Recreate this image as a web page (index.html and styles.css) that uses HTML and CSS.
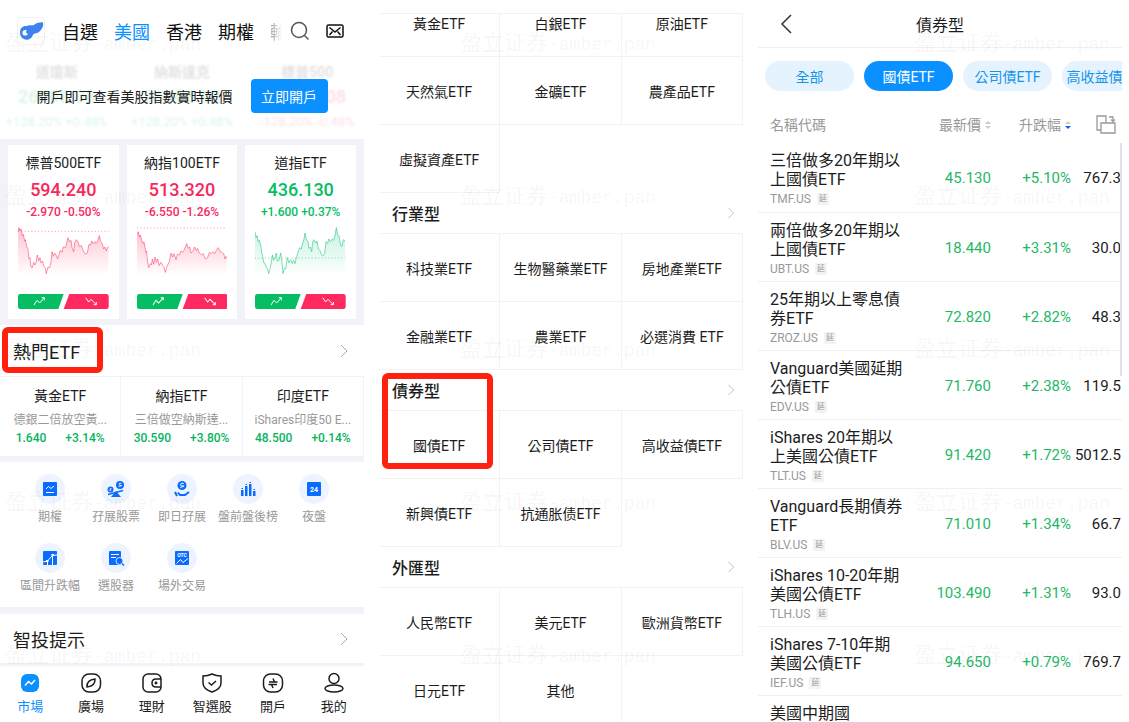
FILE: index.html
```html
<!DOCTYPE html>
<html lang="zh-Hant">
<head>
    <meta charset="UTF-8">
    <meta name="viewport" content="width=device-width, initial-scale=1.0">
    <title>ETF</title>
    <link rel="stylesheet" href="styles.css">
</head>
<body>
<div class="screens">

    <!-- market home -->
    <section class="screen home">
        <header class="topbar">
            <svg class="logo" viewBox="0 0 28 28"><rect x=".5" y=".5" width="27" height="27" rx="4" fill="#fff" stroke="#f0f0f0"/><path d="M3 15C3 11 6 8.500 10 9C12 7.500 15 9 17 8C20 5 23 6 25.500 5C27.500 8 25 12 23 14C20.500 17 17 15.500 16 18C14.500 22 10 24 7 22C4 21 3 18 3 15Z" fill="#3e82f0"/><path d="M5.500 16C5.500 13 8 12.500 10 13.500C8 14 9.500 17 11 17C9.500 19 5.500 19.500 5.500 16Z" fill="#fff"/></svg>
            <nav class="markets">
                <a href="#">自選</a>
                <a href="#" class="active">美國</a>
                <a href="#">香港</a>
                <a href="#">期權</a>
                <a href="#" class="cut">輪證</a>
            </nav>
            <button class="icon-btn" aria-label="搜尋"><svg width="20" height="20" viewBox="0 0 20 20" fill="none" stroke="#555" stroke-width="1.5"><circle cx="9" cy="9" r="7.500"/><path d="M14.500 14.500L18.500 18.500"/></svg></button>
            <button class="icon-btn mail" aria-label="訊息"><svg width="18" height="14" viewBox="0 0 18 14" fill="none" stroke="#111" stroke-width="1.5"><rect x="1" y="1" width="16" height="12" rx="1.500"/><path d="M3.500 3.500L9 8L14.500 3.500M3.500 11L6.500 7.500M14.500 11L11.500 7.500"/></svg></button>
        </header>

        <div class="quotes">
            <div class="indices" aria-hidden="true">
                <div class="up"><b>道瓊斯</b><strong>26008.08</strong><span>+128.20% +0.48%</span></div>
                <div class="up"><b>納斯達克</b><strong>26008.08</strong><span>+128.20% +0.48%</span></div>
                <div class="down"><b>標普500</b><strong>26008.08</strong><span>-128.20% -0.48%</span></div>
            </div>
            <div class="open-account">
                <span>開戶即可查看美股指數實時報價</span>
                <button>立即開戶</button>
            </div>
        </div>

        <div class="cards">
            <article class="card down">
                <h3>標普500ETF</h3>
                <strong>594.240</strong>
                <p>-2.970 -0.50%</p>
                <svg class="chart" viewBox="0 0 272 150" preserveAspectRatio="none">
                    <defs>
                        <linearGradient id="redFill" x1="0" y1="0" x2="0" y2="1"><stop offset="0" stop-color="#ffc3cf"/><stop offset="1" stop-color="#fff"/></linearGradient>
                        <linearGradient id="greenFill" x1="0" y1="0" x2="0" y2="1"><stop offset="0" stop-color="#c4f3e2"/><stop offset="1" stop-color="#fff"/></linearGradient>
                    </defs>
                    <path class="area" d="M0 20L3 8L6 18L9 12L13 32L16 28L20 48L22 44L26 64L30 72L33 102L36 98L39 126L43 128L47 112L51 120L54 114L58 90L62 108L66 98L69 114L74 108L77 122L81 128L85 146L90 126L95 128L99 112L102 80L106 94L110 84L114 90L119 102L123 88L127 76L132 82L136 66L142 68L147 52L150 38L155 50L159 46L162 68L167 80L170 54L175 44L180 50L184 64L190 62L196 78L202 88L208 84L213 58L218 60L221 48L226 56L230 50L234 56L239 48L244 32L248 50L252 54L257 72L261 66L265 78L271 64V150H0Z"/>
                    <path class="base" d="M0 19H272"/>
                    <path class="line" d="M0 20L3 8L6 18L9 12L13 32L16 28L20 48L22 44L26 64L30 72L33 102L36 98L39 126L43 128L47 112L51 120L54 114L58 90L62 108L66 98L69 114L74 108L77 122L81 128L85 146L90 126L95 128L99 112L102 80L106 94L110 84L114 90L119 102L123 88L127 76L132 82L136 66L142 68L147 52L150 38L155 50L159 46L162 68L167 80L170 54L175 44L180 50L184 64L190 62L196 78L202 88L208 84L213 58L218 60L221 48L226 56L230 50L234 56L239 48L244 32L248 50L252 54L257 72L261 66L265 78L271 64"/>
                </svg>
                <svg class="votes" viewBox="0 0 272 45" preserveAspectRatio="none"><path d="M7 0H137L121 45H7Q0 45 0 38V7Q0 0 7 0Z" fill="#05bd62"/><path d="M154 0H265Q272 0 272 7V38Q272 45 265 45H137Z" fill="#ff285f"/><path d="M48 33L57 19L65 27L79 11M71 11H79V19M203 11L212 24L219 16L235 32M227 32H235V24" fill="none" stroke="#fff" stroke-width="3"/></svg>
            </article>
            <article class="card down">
                <h3>納指100ETF</h3>
                <strong>513.320</strong>
                <p>-6.550 -1.26%</p>
                <svg class="chart" viewBox="0 0 272 150" preserveAspectRatio="none">
                    <path class="area" d="M0 28L4 20L7 36L10 30L14 46L18 55L21 51L24 67L27 82L29 78L31 105L35 128L40 116L43 120L46 102L50 118L54 96L58 112L62 102L66 122L72 112L76 120L80 124L85 142L89 126L93 118L97 110L102 84L107 96L111 86L117 104L121 88L127 90L132 78L137 82L142 74L149 56L154 70L158 66L162 84L168 78L173 66L178 76L182 70L187 84L194 90L199 86L205 102L212 98L217 82L222 86L228 80L233 86L239 74L244 68L249 80L254 82L260 86L264 102L267 94L270 98V150H0Z"/>
                    <path class="base" d="M0 9H272"/>
                    <path class="line" d="M0 28L4 20L7 36L10 30L14 46L18 55L21 51L24 67L27 82L29 78L31 105L35 128L40 116L43 120L46 102L50 118L54 96L58 112L62 102L66 122L72 112L76 120L80 124L85 142L89 126L93 118L97 110L102 84L107 96L111 86L117 104L121 88L127 90L132 78L137 82L142 74L149 56L154 70L158 66L162 84L168 78L173 66L178 76L182 70L187 84L194 90L199 86L205 102L212 98L217 82L222 86L228 80L233 86L239 74L244 68L249 80L254 82L260 86L264 102L267 94L270 98"/>
                </svg>
                <svg class="votes" viewBox="0 0 272 45" preserveAspectRatio="none"><path d="M7 0H137L121 45H7Q0 45 0 38V7Q0 0 7 0Z" fill="#05bd62"/><path d="M154 0H265Q272 0 272 7V38Q272 45 265 45H137Z" fill="#ff285f"/><path d="M48 33L57 19L65 27L79 11M71 11H79V19M203 11L212 24L219 16L235 32M227 32H235V24" fill="none" stroke="#fff" stroke-width="3"/></svg>
            </article>
            <article class="card up">
                <h3>道指ETF</h3>
                <strong>436.130</strong>
                <p>+1.600 +0.37%</p>
                <svg class="chart" viewBox="0 0 272 150" preserveAspectRatio="none">
                    <path class="area" d="M0 20L3 38L6 32L10 50L13 46L17 60L20 82L23 94L26 112L30 114L34 128L37 130L41 146L46 128L49 112L52 90L56 106L60 96L64 84L67 108L72 106L77 84L81 110L84 146L88 130L92 132L97 98L102 114L107 104L112 116L116 106L120 116L124 98L129 82L134 68L139 72L143 54L147 42L150 24L154 44L159 50L162 70L166 66L170 80L173 50L177 44L182 54L186 48L190 72L195 76L199 88L204 92L209 86L213 50L218 56L221 42L227 50L232 42L236 46L240 32L244 8L248 28L252 32L257 62L261 64L265 44L270 48V150H0Z"/>
                    <path class="base" d="M0 99H272"/>
                    <path class="line" d="M0 20L3 38L6 32L10 50L13 46L17 60L20 82L23 94L26 112L30 114L34 128L37 130L41 146L46 128L49 112L52 90L56 106L60 96L64 84L67 108L72 106L77 84L81 110L84 146L88 130L92 132L97 98L102 114L107 104L112 116L116 106L120 116L124 98L129 82L134 68L139 72L143 54L147 42L150 24L154 44L159 50L162 70L166 66L170 80L173 50L177 44L182 54L186 48L190 72L195 76L199 88L204 92L209 86L213 50L218 56L221 42L227 50L232 42L236 46L240 32L244 8L248 28L252 32L257 62L261 64L265 44L270 48"/>
                </svg>
                <svg class="votes" viewBox="0 0 272 45" preserveAspectRatio="none"><path d="M7 0H137L121 45H7Q0 45 0 38V7Q0 0 7 0Z" fill="#05bd62"/><path d="M154 0H265Q272 0 272 7V38Q272 45 265 45H137Z" fill="#ff285f"/><path d="M48 33L57 19L65 27L79 11M71 11H79V19M203 11L212 24L219 16L235 32M227 32H235V24" fill="none" stroke="#fff" stroke-width="3"/></svg>
            </article>
        </div>

        <div class="title-row">
            <h2>熱門ETF</h2>
            <svg class="chevron" viewBox="0 0 8 14"><path d="M1 1L7 7L1 13"/></svg>
            <i class="mark mark-title"></i>
        </div>
        <div class="hot">
            <a href="#"><b>黃金ETF</b><small>德銀二倍放空黃...</small><span><em>1.640</em><em>+3.14%</em></span></a>
            <a href="#"><b>納指ETF</b><small>三倍做空納斯達...</small><span><em>30.590</em><em>+3.80%</em></span></a>
            <a href="#"><b>印度ETF</b><small>iShares印度50 E...</small><span><em>48.500</em><em>+0.14%</em></span></a>
        </div>

        <div class="tools">
            <a href="#"><svg viewBox="0 0 30 30"><circle cx="15" cy="15" r="15"/><rect x="8" y="8" width="14" height="14" rx="1" fill="#0a6cff"/><path d="M11 15L13.500 12.500L16 14.500L19 12M11 18.500H19" fill="none" stroke="#fff"/></svg>期權</a>
            <a href="#"><svg viewBox="0 0 30 30"><circle cx="15" cy="15" r="15"/><g fill="#0a6cff"><circle cx="19" cy="11" r="4"/><circle cx="9.500" cy="15.500" r="3"/><path d="M15 17L20 23H10Z"/></g><path d="M7 20.500L22 16.500" stroke="#0a6cff" stroke-width="1.500"/><path d="M20.500 9.500Q18 8.500 18 10T20 11.500T17.500 12.500M10.500 14.500Q9 14 9 15T10 16T8.500 16.500" fill="none" stroke="#fff" stroke-width=".8"/></svg>孖展股票</a>
            <a href="#"><svg viewBox="0 0 30 30"><circle cx="15" cy="15" r="15"/><circle cx="15" cy="11.500" r="4.500" fill="#0a6cff"/><path d="M16.700 9.500Q13.500 8.500 13.500 10.500T16.200 12T13.300 13.500" fill="none" stroke="#fff"/><path d="M8 18L10 22M11 18.500L13 21H18L22 18" fill="none" stroke="#0a6cff" stroke-width="2"/></svg>即日孖展</a>
            <a href="#"><svg viewBox="0 0 30 30"><circle cx="15" cy="15" r="15"/><path d="M8 16h2.500v6H8zM12 12h2.500v10H12zM16 10h2.500v12H16zM20 17h2.500v5H20zM8.500 14h1.500v1H8.500zM12.500 10h1.500v1h-1.500zM16.500 8h1.500v1h-1.500zM20.500 15h1.500v1h-1.500z" fill="#0a6cff"/></svg>盤前盤後榜</a>
            <a href="#"><svg viewBox="0 0 30 30"><circle cx="15" cy="15" r="15"/><rect x="8" y="8" width="14" height="14" rx="1" fill="#0a6cff"/><text x="15" y="18" font-size="7">24</text></svg>夜盤</a>
            <a href="#"><svg viewBox="0 0 30 30"><circle cx="15" cy="15" r="15"/><rect x="8" y="8" width="14" height="14" rx="1" fill="#0a6cff"/><path d="M8 19L12.500 18L17.500 12.500L22 12M12.500 18V22M17.500 13V22" fill="none" stroke="#fff"/><path d="M11 17h2.500v2H11zM16.500 11H19v2h-2.500z" fill="#fff"/></svg>區間升跌幅</a>
            <a href="#"><svg viewBox="0 0 30 30"><circle cx="15" cy="15" r="15"/><rect x="8" y="8" width="12" height="14" rx="1" fill="#0a6cff"/><path d="M10 11.500H18M10 14.500H15" stroke="#fff"/><circle cx="18.500" cy="18" r="3.500" fill="#0a6cff" stroke="#fff" stroke-width=".8"/><path d="M21 20.500L23 22.500" stroke="#0a6cff" stroke-width="1.500"/></svg>選股器</a>
            <a href="#"><svg viewBox="0 0 30 30"><circle cx="15" cy="15" r="15"/><rect x="8" y="8" width="14" height="14" rx="1" fill="#0a6cff"/><text x="15" y="14" font-size="5">OTC</text><path d="M9.500 20.500L13.500 16.500L16 19.500L21 15.500" fill="none" stroke="#fff"/></svg>場外交易</a>
        </div>

        <div class="title-row tips">
            <h2>智投提示</h2>
            <svg class="chevron" viewBox="0 0 8 14"><path d="M1 1L7 7L1 13"/></svg>
        </div>

        <nav class="bottom-nav">
            <a href="#" class="active"><svg viewBox="0 0 22 22"><rect x="2" y="2" width="18" height="18" rx="6" fill="#0a90ff"/><path d="M6 13.500L9.500 9.500L12.500 12L16 8" stroke="#fff"/></svg>市場</a>
            <a href="#"><svg viewBox="0 0 22 22"><rect x="2" y="2" width="18.500" height="18" rx="7"/><path d="M7 15Q6.500 8 15 7Q15.500 14 7 15Z"/></svg>廣場</a>
            <a href="#"><svg viewBox="0 0 22 22"><rect x="2" y="2" width="18" height="18" rx="5"/><path d="M20 7H15Q11 7 11 11T15 15H20"/><circle cx="15" cy="11" r=".7"/></svg>理財</a>
            <a href="#"><svg viewBox="0 0 22 22"><path d="M11 2Q15 4 20 4V11Q20 17 11 20Q2 17 2 11V4Q7 4 11 2Z"/><path d="M7.500 10.500L10.500 13L15 9"/></svg>智選股</a>
            <a href="#"><svg viewBox="0 0 22 22"><rect x="1.500" y="2" width="19" height="18" rx="7"/><path d="M7 10H15.500M12.500 10L11 6.500M15 12.500H6.500M9.500 12.500L11 16"/></svg>開戶</a>
            <a href="#"><svg viewBox="0 0 22 22"><circle cx="11" cy="6.500" r="5"/><ellipse cx="11" cy="16.500" rx="9" ry="3.500"/></svg>我的</a>
        </nav>

        <div class="watermarks" aria-hidden="true">
            <p><b>盈立证券</b>-amber.pan</p><p><b>盈立证券</b>-amber.pan</p><p><b>盈立证券</b>-amber.pan</p><p><b>盈立证券</b>-amber.pan</p><p><b>盈立证券</b>-amber.pan</p>
        </div>
    </section>

    <!-- ETF categories -->
    <section class="screen types">
        <div class="types-scroll">
            <div class="group first">
                <div class="cells">
                    <a href="#">黃金ETF</a><a href="#">白銀ETF</a><a href="#">原油ETF</a>
                    <a href="#">天然氣ETF</a><a href="#">金礦ETF</a><a href="#">農產品ETF</a>
                    <a href="#">虛擬資產ETF</a>
                </div>
            </div>
            <div class="group">
                <div class="group-title"><h2>行業型</h2><svg class="chevron" viewBox="0 0 8 14"><path d="M1 1L7 7L1 13"/></svg></div>
                <div class="cells">
                    <a href="#">科技業ETF</a><a href="#">生物醫藥業ETF</a><a href="#">房地產業ETF</a>
                    <a href="#">金融業ETF</a><a href="#">農業ETF</a><a href="#">必選消費 ETF</a>
                </div>
            </div>
            <div class="group">
                <div class="group-title"><h2>債券型</h2><svg class="chevron" viewBox="0 0 8 14"><path d="M1 1L7 7L1 13"/></svg></div>
                <div class="cells">
                    <a href="#">國債ETF</a><a href="#">公司債ETF</a><a href="#">高收益債ETF</a>
                    <a href="#">新興債ETF</a><a href="#">抗通胀债ETF</a>
                </div>
                <i class="mark mark-bond"></i>
            </div>
            <div class="group">
                <div class="group-title"><h2>外匯型</h2><svg class="chevron" viewBox="0 0 8 14"><path d="M1 1L7 7L1 13"/></svg></div>
                <div class="cells">
                    <a href="#">人民幣ETF</a><a href="#">美元ETF</a><a href="#">歐洲貨幣ETF</a>
                    <a href="#">日元ETF</a><a href="#">其他</a>
                </div>
            </div>
        </div>
        <div class="watermarks" aria-hidden="true">
            <p><b>盈立证券</b>-amber.pan</p><p><b>盈立证券</b>-amber.pan</p><p><b>盈立证券</b>-amber.pan</p><p><b>盈立证券</b>-amber.pan</p><p><b>盈立证券</b>-amber.pan</p>
        </div>
    </section>

    <!-- bond ETF list -->
    <section class="screen bonds">
        <header class="bonds-head">
            <button class="icon-btn" aria-label="返回"><svg width="12" height="20" viewBox="0 0 12 20" fill="none" stroke="#333" stroke-width="1.5"><path d="M11 1L2 10L11 19"/></svg></button>
            <h1>債券型</h1>
        </header>
        <div class="pills">
            <button>全部</button>
            <button class="active">國債ETF</button>
            <button>公司債ETF</button>
            <button>高收益債ETF</button>
        </div>
        <table>
            <colgroup><col class="c-name"><col class="c-price"><col class="c-change"><col></colgroup>
            <thead>
                <tr>
                    <th>名稱代碼</th>
                    <th>最新價<svg class="sort" viewBox="0 0 6 10"><path d="M0 4L3 1L6 4Z"/><path d="M0 6L3 9L6 6Z"/></svg></th>
                    <th>升跌幅<svg class="sort desc" viewBox="0 0 6 10"><path d="M0 4L3 1L6 4Z"/><path d="M0 6L3 9L6 6Z"/></svg></th>
                    <th><svg class="switch" viewBox="0 0 20 19" fill="none" stroke="#999" stroke-width="1.3"><path d="M5 15H1V1H10V8M5 8H19V18H5ZM13 2H17V6M15 4.500L17 6.500L19 4.500"/></svg></th>
                </tr>
            </thead>
            <tbody>
                <tr><td>三倍做多20年期以<br>上國債ETF<small>TMF.US <i>延</i></small></td><td>45.130</td><td>+5.10%</td><td>767.3</td></tr>
                <tr><td>兩倍做多20年期以<br>上國債ETF<small>UBT.US <i>延</i></small></td><td>18.440</td><td>+3.31%</td><td>30.0</td></tr>
                <tr><td>25年期以上零息債<br>券ETF<small>ZROZ.US <i>延</i></small></td><td>72.820</td><td>+2.82%</td><td>48.3</td></tr>
                <tr><td>Vanguard美國延期<br>公債ETF<small>EDV.US <i>延</i></small></td><td>71.760</td><td>+2.38%</td><td>119.5</td></tr>
                <tr><td>iShares 20年期以<br>上美國公債ETF<small>TLT.US <i>延</i></small></td><td>91.420</td><td>+1.72%</td><td>5012.5</td></tr>
                <tr><td>Vanguard長期債券<br>ETF<small>BLV.US <i>延</i></small></td><td>71.010</td><td>+1.34%</td><td>66.7</td></tr>
                <tr><td>iShares 10-20年期<br>美國公債ETF<small>TLH.US <i>延</i></small></td><td>103.490</td><td>+1.31%</td><td>93.0</td></tr>
                <tr><td>iShares 7-10年期<br>美國公債ETF<small>IEF.US <i>延</i></small></td><td>94.650</td><td>+0.79%</td><td>769.7</td></tr>
                <tr><td>美國中期國</td><td></td><td></td><td></td></tr>
            </tbody>
        </table>
        <i class="scrollbar"></i>
        <div class="watermarks" aria-hidden="true">
            <p><b>盈立证券</b>-amber.pan</p><p><b>盈立证券</b>-amber.pan</p><p><b>盈立证券</b>-amber.pan</p><p><b>盈立证券</b>-amber.pan</p><p><b>盈立证券</b>-amber.pan</p>
        </div>
    </section>

</div>
</body>
</html>
```
FILE: styles.css
```css
* {
    box-sizing: border-box;
}
body {
    margin: 0;
    background: #fff;
    color: #1c1c1c;
    font-family: Roboto, "Noto Sans CJK TC", sans-serif;
    font-size: 14px;
}
h1, h2, h3, p {
    margin: 0;
    font-weight: 400;
}
a {
    color: inherit;
    text-decoration: none;
}
button {
    font: inherit;
    border: none;
    padding: 0;
    cursor: pointer;
}
em, i {
    font-style: normal;
}
svg {
    display: block;
}
.screens {
    display: grid;
    grid-template-columns: repeat(3, minmax(0, 1fr));
    gap: 15px;
    padding-right: 7px;
    height: 100vh;
    overflow: hidden;
}
.screen {
    position: relative;
    overflow: hidden;
}
.icon-btn {
    background: none;
}
.chevron {
    width: 8px;
    height: 14px;
    fill: none;
    stroke: #aaa;
}

/* home */
.topbar {
    display: flex;
    align-items: center;
    height: 61px;
    padding: 0 20px 0 17px;
}
.logo {
    width: 28px;
    height: 28px;
}
.markets {
    display: flex;
    flex: 1;
    gap: 16px;
    margin-left: 17px;
    overflow: hidden;
    white-space: nowrap;
    font-size: 18px;
    color: #111;
}
.markets .active {
    color: #0a90ff;
}
.markets .cut {
    width: 12px;
    overflow: hidden;
    color: #999;
    -webkit-mask-image: linear-gradient(to right, #000, transparent);
    mask-image: linear-gradient(to right, #000, transparent);
}
.mail {
    margin-left: 16px;
}
.quotes {
    position: relative;
    height: 78px;
}
.indices {
    display: grid;
    grid-template-columns: repeat(3, 1fr);
    gap: 12px;
    text-align: center;
    white-space: nowrap;
    filter: blur(1px);
    opacity: 0.14;
}
.indices b {
    display: block;
    line-height: 22px;
    color: #333;
}
.indices strong {
    display: block;
    font-size: 18px;
    line-height: 28px;
}
.indices span {
    display: block;
    font-size: 13px;
    line-height: 22px;
}
.open-account {
    position: absolute;
    inset: 0;
    display: flex;
    align-items: center;
    justify-content: center;
    gap: 18px;
    padding-bottom: 8px;
}
.open-account button {
    width: 77px;
    height: 34px;
    border-radius: 4px;
    background: #0a90ff;
    color: #fff;
}
.up {
    color: #05bd62;
}
.down {
    color: #f8285c;
}
.cards {
    display: grid;
    grid-template-columns: repeat(3, 1fr);
    gap: 8px;
    padding: 6px 8px;
    background: #f1f3f9;
}
.card {
    height: 174px;
    padding: 7px 10px 0;
    background: #fff;
    text-align: center;
    white-space: nowrap;
}
.card h3 {
    font-size: 14px;
    line-height: 22px;
    color: #1c1c1c;
}
.card strong {
    display: block;
    font-size: 18px;
    font-weight: 500;
    line-height: 32px;
}
.card p {
    font-size: 12px;
    font-weight: 500;
    line-height: 12px;
}
.chart {
    width: 100%;
    height: 50px;
    margin-top: 7px;
}
.chart .line, .chart .base {
    fill: none;
    stroke: currentColor;
    stroke-width: 2;
    opacity: 0.75;
}
.chart .base {
    stroke-width: 3;
    stroke-dasharray: 3 7;
    opacity: 0.5;
}
.chart .area {
    fill: url(#redFill);
}
.up .chart .area {
    fill: url(#greenFill);
}
.votes {
    width: 100%;
    height: 15px;
    margin-top: 19px;
}
.title-row {
    position: relative;
    display: flex;
    align-items: center;
    justify-content: space-between;
    height: 52px;
    padding: 0 16px 0 13px;
    border-bottom: 1px solid #f1f3f5;
}
.title-row h2 {
    font-size: 18px;
}
.mark {
    position: absolute;
    border: 6px solid #ff2010;
    border-radius: 6px;
}
.mark-title {
    left: 2px;
    top: 2px;
    width: 101px;
    height: 46px;
}
.mark-bond {
    left: 3px;
    top: 3px;
    width: 111px;
    height: 96px;
}
.hot {
    display: grid;
    grid-template-columns: repeat(3, 1fr);
    border-bottom: 6px solid #f1f3f9;
}
.hot a {
    display: flex;
    flex-direction: column;
    align-items: center;
    padding: 8px 0;
    border-right: 1px solid #f1f3f5;
    white-space: nowrap;
}
.hot b {
    font-weight: 400;
    line-height: 22px;
}
.hot small {
    margin-top: 4px;
    font-size: 12px;
    line-height: 18px;
    color: #999;
}
.hot span {
    display: flex;
    gap: 19px;
    font-size: 12px;
    font-weight: 500;
    line-height: 19px;
    color: #05b45c;
}
.tools {
    display: grid;
    grid-template-columns: repeat(5, 1fr);
    padding: 12px 17px 7px;
    border-bottom: 7px solid #f1f3f9;
    font-size: 12px;
    line-height: 18px;
    color: #999;
}
.tools a {
    display: flex;
    flex-direction: column;
    align-items: center;
    gap: 4px;
    height: 69px;
    white-space: nowrap;
}
.tools a:nth-child(n+6) {
    height: 57px;
}
.tools svg {
    width: 30px;
    height: 30px;
}
.tools circle:first-child {
    fill: #edf4ff;
}
.tools g circle:first-child {
    fill: #0a6cff;
}
.tools text {
    fill: #fff;
    font-weight: 700;
    text-anchor: middle;
}
.tips {
    border-bottom: 3px solid #f1f3f9;
}
.bottom-nav {
    display: grid;
    grid-template-columns: repeat(6, 1fr);
    padding-top: 6px;
    font-size: 13px;
    line-height: 18px;
}
.bottom-nav a {
    display: flex;
    flex-direction: column;
    align-items: center;
    gap: 4px;
}
.bottom-nav svg {
    width: 22px;
    height: 22px;
    fill: none;
    stroke: #1c1c1c;
    stroke-width: 1.5;
}
.bottom-nav .active {
    color: #0a90ff;
}
.bottom-nav .active svg {
    stroke: none;
}

/* categories */
.types-scroll {
    margin-top: 13px;
    border-top: 1px solid #f2f2f2;
    overflow: hidden;
}
.group {
    position: relative;
}
.group.first {
    margin-top: -25px;
}
.group-title {
    display: flex;
    align-items: center;
    justify-content: space-between;
    height: 41px;
    padding: 0 8px 0 13px;
    border-bottom: 1px solid #f2f2f2;
}
.group-title h2, .bonds-head h1 {
    font-size: 16px;
}
.group-title h2 {
    font-weight: 500;
}
.group-title .chevron {
    height: 12px;
    stroke: #a9b9c9;
}
.cells {
    display: grid;
    grid-template-columns: repeat(3, 1fr);
}
.cells a {
    display: flex;
    align-items: center;
    justify-content: center;
    height: 68px;
    border-right: 1px solid #f2f2f2;
    border-bottom: 1px solid #f2f2f2;
}

/* bonds */
.bonds-head {
    display: grid;
    grid-template-columns: 34px 1fr 34px;
    align-items: center;
    height: 48px;
    border-bottom: 1px solid #f0f0f0;
    text-align: center;
}
.bonds-head .icon-btn {
    justify-self: end;
}
.pills {
    display: flex;
    gap: 10px;
    padding: 13px 0 14px 7px;
    overflow: hidden;
}
.pills button {
    flex: 0 0 89px;
    height: 30px;
    border-radius: 15px;
    background: #e5f3ff;
    color: #1695e8;
    white-space: nowrap;
}
.pills .active {
    background: #0a90ff;
    color: #fff;
}
table {
    width: 100%;
    table-layout: fixed;
    border-collapse: collapse;
}
.c-name {
    width: 43%;
}
.c-price {
    width: 21%;
}
.c-change {
    width: 22%;
}
th {
    height: 38px;
    padding: 0;
    font-weight: 400;
    color: #999;
    text-align: right;
    white-space: nowrap;
}
th:first-child, td:first-child {
    padding-left: 12px;
    text-align: left;
}
.sort {
    display: inline-block;
    width: 6px;
    height: 10px;
    margin-left: 4px;
    fill: #ccc;
}
.sort.desc path:last-child {
    fill: #0a5cff;
}
.switch {
    width: 20px;
    height: 19px;
    margin: 0 6px 0 auto;
}
tbody tr {
    height: 69px;
    border-bottom: 1px solid #f0f0f0;
}
td {
    padding: 2px 0 0;
    font-size: 15px;
    color: #1fb866;
    text-align: right;
}
td:first-child {
    padding-top: 8px;
    font-size: 16px;
    line-height: 19px;
    color: #1c1c1c;
    vertical-align: top;
    white-space: nowrap;
}
td:last-child {
    padding-right: 1px;
    color: #1c1c1c;
}
td small {
    display: flex;
    align-items: center;
    gap: 6px;
    font-size: 12px;
    line-height: 20px;
    color: #999;
}
td small i {
    padding: 0 2px;
    background: #f3f3f3;
    font-size: 8px;
    line-height: 12px;
}
.scrollbar {
    position: absolute;
    right: 0;
    top: 143px;
    width: 2px;
    height: 233px;
    background: #dfe2e6;
}

/* watermark layer over each screen */
.watermarks {
    position: absolute;
    top: 29px;
    left: 5px;
    color: rgba(0, 0, 0, 0.05);
    font-family: "Liberation Mono", "Noto Sans CJK SC", monospace;
    font-size: 18px;
    pointer-events: none;
    white-space: nowrap;
}
.watermarks p {
    height: 153px;
    line-height: 32px;
}
.watermarks b {
    font-size: 22px;
    font-weight: 400;
}
.types .watermarks {
    left: 81px;
}
.bonds .watermarks {
    left: 156px;
}
```
